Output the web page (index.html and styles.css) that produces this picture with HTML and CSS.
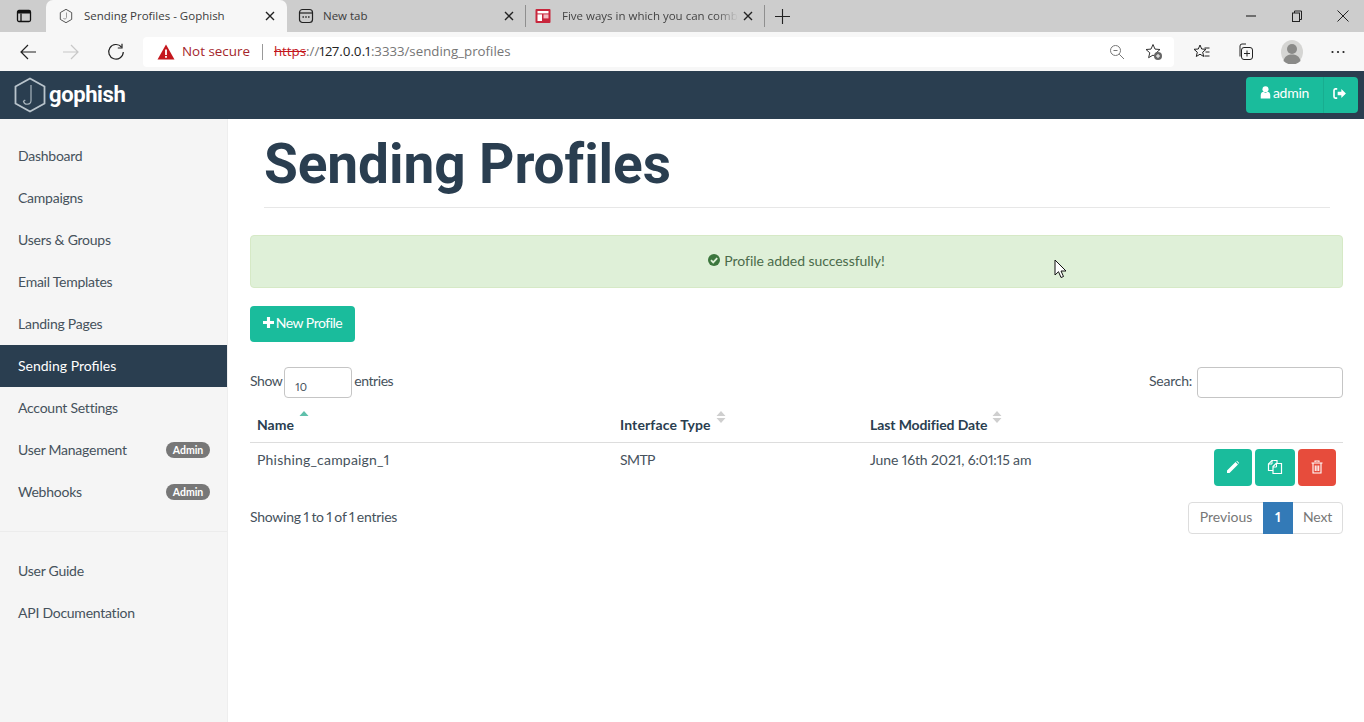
FILE: index.html
```html
<!DOCTYPE html>
<html lang="en">
<head>
<meta charset="utf-8">
<title>Sending Profiles - Gophish</title>
<link rel="stylesheet" href="styles.css">
</head>
<body>
<div class="tabstrip">
  <div class="tabside"><svg class="ic16" viewBox="0 0 16 16"><rect x="1.5" y="2.5" width="13" height="11" rx="1.5" fill="none" stroke="#111" stroke-width="1.3"/><path d="M5 5.500v8" stroke="#111" stroke-width="1.3" fill="none"/><rect x="2" y="3" width="12" height="2.5" fill="#111"/></svg></div>
  <div class="tab tab-active">
    <svg class="ic16" viewBox="0 0 16 16"><path d="M8 1.300l5.700 3.300v6.800L8 14.700l-5.700-3.300V4.600z" fill="none" stroke="#555" stroke-width="1"/><path d="M8.500 4.500v5a1.700 1.700 0 0 1-3.200.6" fill="none" stroke="#888" stroke-width=".8"/></svg>
    <span class="tab-title">Sending Profiles - Gophish</span>
    <svg class="tab-x" viewBox="0 0 10 10"><path d="M1 1l8 8M9 1l-8 8" stroke="#222" stroke-width="1.4"/></svg>
  </div>
  <div class="tab tab-plain">
    <svg class="ic16" viewBox="0 0 16 16"><rect x="1.500" y="1.500" width="13" height="13" rx="3" fill="none" stroke="#222" stroke-width="1.2"/><path d="M1.500 5h13" stroke="#222" stroke-width="1.2"/><path d="M4.500 9h1.400M7.300 9h1.400M10.100 9h1.400" stroke="#222" stroke-width="1.4"/></svg>
    <span class="tab-title">New tab</span>
    <svg class="tab-x" viewBox="0 0 10 10"><path d="M1 1l8 8M9 1l-8 8" stroke="#222" stroke-width="1.4"/></svg>
  </div>
  <div class="tab tab-third">
    <svg class="ic16" viewBox="0 0 16 16"><rect x=".5" y="1" width="15" height="14" rx="1" fill="#c8263c"/><rect x="2.500" y="3" width="11" height="2.400" fill="#fff"/><rect x="2.500" y="6.400" width="4.500" height="6.600" fill="#fff"/><rect x="8.500" y="6.400" width="5" height="4" fill="#f3b8c0"/></svg>
    <span class="tab-title tab-fade">Five ways in which you can comb</span>
    <svg class="tab-x" viewBox="0 0 10 10"><path d="M1 1l8 8M9 1l-8 8" stroke="#222" stroke-width="1.4"/></svg>
  </div>
  <svg class="newtab" viewBox="0 0 16 16"><path d="M8 0v16M0 8h16" stroke="#222" stroke-width="1.2"/></svg>
  <div class="winctl">
    <svg class="ic12" viewBox="0 0 12 12"><path d="M1 6h10" stroke="#222" stroke-width="1.1"/></svg>
    <svg class="ic12" viewBox="0 0 12 12"><rect x="1.500" y="3" width="7" height="8.500" fill="none" stroke="#222"/><path d="M3.500 3V1h7v8.500H8.500" fill="none" stroke="#222"/></svg>
    <svg class="ic12" viewBox="0 0 12 12"><path d="M.5 .5l11 11M11.500 .5l-11 11" stroke="#222" stroke-width="1"/></svg>
  </div>
</div>
<div class="toolbar">
  <svg class="nav-ic nav-back" viewBox="0 0 18 18"><path d="M17 9H2M9 2L2 9l7 7" fill="none" stroke="#222" stroke-width="1.2"/></svg>
  <svg class="nav-ic nav-fwd" viewBox="0 0 18 18"><path d="M1 9h15M9 2l7 7-7 7" fill="none" stroke="#c8c8c8" stroke-width="1.2"/></svg>
  <svg class="nav-ic nav-reload" viewBox="0 0 18 18"><path d="M14.500 4A7.300 7.300 0 1 0 16.300 9" fill="none" stroke="#222" stroke-width="1.2"/><path d="M15 .8V5h-4.200" fill="none" stroke="#222" stroke-width="1.2"/></svg>
  <div class="addr">
    <svg class="warn" viewBox="0 0 18 16"><path d="M9 .5L17.500 15.500H.5z" fill="#c4161c"/><path d="M9 5.500v5.500M9 12v1.800" stroke="#fff" stroke-width="1.800"/></svg>
    <span class="notsec">Not secure</span>
    <span class="addr-sep"></span>
    <span class="url"><s class="url-s">https</s><span class="url-dim">://</span><span class="url-host">127.0.0.1</span><span class="url-dim">:3333/sending_profiles</span></span>
    <svg class="ic16 addr-zoom" viewBox="0 0 16 16"><circle cx="6.500" cy="6.500" r="5" fill="none" stroke="#777"/><path d="M10.200 10.200L15 15M4.500 6.500h4" stroke="#777"/></svg>
    <svg class="addr-star" viewBox="0 0 18 18"><path d="M8 1.500l2 4.600 5 .4-3.800 3.300 1.200 4.900L8 12.100l-4.400 2.600 1.200-4.900L1 6.500l5-.4z" fill="none" stroke="#333"/><circle cx="13" cy="13" r="4" fill="#666"/><path d="M13 11v4M11 13h4" stroke="#fff"/></svg>
  </div>
  <svg class="tb-ic tb-fav" viewBox="0 0 18 18"><path d="M7 2l1.700 4 4.300.3-3.300 2.900 1 4.300L7 11.200 3.300 13.500l1-4.300L1 6.300 5.300 6z" fill="none" stroke="#222"/><path d="M11.500 5h5M12.500 9h4M11.500 13h5" stroke="#222"/></svg>
  <svg class="tb-ic tb-coll" viewBox="0 0 18 18"><path d="M4 13.500V3a2 2 0 0 1 2-2h4" fill="none" stroke="#222"/><rect x="5.500" y="4.500" width="11" height="12" rx="2.500" fill="#f7f7f7" stroke="#222"/><path d="M11 7.500v6M8 10.500h6" stroke="#222"/></svg>
  <svg class="tb-avatar" viewBox="0 0 24 24"><ellipse cx="12" cy="12" rx="11" ry="12" fill="#d5d5d3"/><circle cx="12" cy="9" r="5" fill="#8a8a88"/><path d="M3.500 21c1-5 4.500-6.500 8.500-6.500s7.500 1.500 8.500 6.500a12 12 0 0 1-17 0z" fill="#8a8a88"/></svg>
  <svg class="tb-ic tb-more" viewBox="0 0 18 18"><circle cx="3.500" cy="9" r="1.100" fill="#222"/><circle cx="9" cy="9" r="1.100" fill="#222"/><circle cx="14.500" cy="9" r="1.100" fill="#222"/></svg>
</div>
<header class="navbar">
  <div class="brand">
    <svg class="brand-mark" viewBox="0 0 32 36"><path d="M16 1.500L30.500 9.500v17L16 34.500 1.500 26.500v-17z" fill="none" stroke="#b9c4cc" stroke-width="1.800"/><path d="M17 8v15.500a3.800 3.800 0 0 1-7.500.8l1.800-1.300" fill="none" stroke="#a9b5bd" stroke-width="1.200"/></svg>
    <span class="brand-name">gophish</span>
  </div>
  <div class="userbtn">
    <span class="user-main"><svg class="ic-user" viewBox="0 0 12 14"><circle cx="6" cy="3.500" r="3.300" fill="#fff"/><path d="M.8 13.500V10c0-2.600 1.800-3.800 3-3.800L6 7.500l2.200-1.300c1.200 0 3 1.200 3 3.800v3.500z" fill="#fff"/></svg>admin</span>
    <span class="user-out"><svg class="ic-out" viewBox="0 0 14 12"><path d="M4.500 1H2.500A1.800 1.800 0 0 0 1 2.800v6.400A1.800 1.800 0 0 0 2.500 11h2" fill="none" stroke="#fff" stroke-width="1.800"/><path d="M5 4h4V1l5 5-5 5V8H5z" fill="#fff"/></svg></span>
  </div>
</header>
<div class="page">
  <nav class="sidebar">
    <ul class="side-list">
      <li class="side-item">Dashboard</li>
      <li class="side-item">Campaigns</li>
      <li class="side-item">Users &amp; Groups</li>
      <li class="side-item">Email Templates</li>
      <li class="side-item">Landing Pages</li>
      <li class="side-item side-active">Sending Profiles</li>
      <li class="side-item">Account Settings</li>
      <li class="side-item">User Management<span class="badge">Admin</span></li>
      <li class="side-item">Webhooks<span class="badge">Admin</span></li>
    </ul>
    <ul class="side-list side-second">
      <li class="side-item">User Guide</li>
      <li class="side-item">API Documentation</li>
    </ul>
  </nav>
  <main class="main">
    <h1 class="title">Sending Profiles</h1>
    <div class="alert"><svg class="ic-check" viewBox="0 0 12 12"><circle cx="6" cy="6" r="6" fill="#3c763d"/><path d="M3 6.200l2.200 2.200L9.200 4.200" fill="none" stroke="#dff0d8" stroke-width="1.800"/></svg>Profile added successfully!</div>
    <button class="btn-new"><svg class="ic-plus" viewBox="0 0 12 12"><path d="M6 0v12M0 6h12" stroke="#fff" stroke-width="3.400"/></svg>New Profile</button>
    <div class="controls">
      <div class="ctl-left">Show <span class="select-box">10</span> entries</div>
      <div class="ctl-right">Search: <input class="search" type="text" aria-label="Search"></div>
    </div>
    <table class="tbl">
      <thead>
        <tr>
          <th class="col-name"><span class="th-in">Name<svg class="sort" viewBox="0 0 10 12"><path d="M5 0l4.500 5H.5z" fill="#5fc0ab"/></svg></span></th>
          <th class="col-type"><span class="th-in">Interface Type<svg class="sort" viewBox="0 0 10 12"><path d="M5 0l4.500 5H.5zM5 12l4.500-5H.5z" fill="#cfcfcf"/></svg></span></th>
          <th class="col-date"><span class="th-in">Last Modified Date<svg class="sort" viewBox="0 0 10 12"><path d="M5 0l4.500 5H.5zM5 12l4.500-5H.5z" fill="#cfcfcf"/></svg></span></th>
          <th class="col-act"></th>
        </tr>
      </thead>
      <tbody>
        <tr>
          <td class="cell-name">Phishing_campaign_1</td>
          <td class="cell-type">SMTP</td>
          <td class="cell-date">June 16th 2021, 6:01:15 am</td>
          <td class="acts">
            <span class="act act-edit"><svg class="ic14" viewBox="0 0 14 14"><path d="M1 10.500L9.500 2l2.500 2.500L3.500 13H1zM10.300 1.300l.7-.5 2.200 2.200-.5.700z" fill="#fff"/></svg></span>
            <span class="act act-copy"><svg class="ic16" viewBox="0 0 16 16"><path d="M6.500 1.500H5L1.500 5v6.500H6" fill="none" stroke="#fff" stroke-width="1.200"/><path d="M5 1.500V5H1.500" fill="none" stroke="#fff" stroke-width="1"/><path d="M6.500 1.500h3.500v3" fill="none" stroke="#fff" stroke-width="1.200"/><path d="M10 4.500H9L6 7.500v7h8.500v-10z" fill="none" stroke="#fff" stroke-width="1.200"/><path d="M9.500 4.500V8H6" fill="none" stroke="#fff" stroke-width="1"/></svg></span>
            <span class="act act-del"><svg class="ic14" viewBox="0 0 14 14"><path d="M5 2V1h4v1M1.500 3h11M3 3.500V13h8V3.500M5.300 5.500V11M7 5.500V11M8.700 5.500V11" fill="none" stroke="#fff" stroke-width="1.100"/></svg></span>
          </td>
        </tr>
      </tbody>
    </table>
    <div class="foot">
      <div class="info">Showing 1 to 1 of 1 entries</div>
      <div class="pager"><span class="pg pg-prev">Previous</span><span class="pg pg-cur">1</span><span class="pg pg-next">Next</span></div>
    </div>
  </main>
</div>
<svg class="cursor" viewBox="0 0 13 20"><path d="M1 1v15l3.500-3.300L7 18.500l2.500-1-2.500-5.500h5z" fill="#fff" stroke="#111"/></svg>
</body>
</html>
```
FILE: styles.css
```css
* { box-sizing: border-box; }
html, body { margin: 0; height: 722px; overflow: hidden; }
body { font-family: "Lato", "Open Sans", sans-serif; font-size: 14px; color: #46525c; background: #fff; position: relative; font-variant-numeric: proportional-nums; }
svg { display: block; flex: none; }
.ic16 { width: 16px; height: 16px; }
.ic14 { width: 14px; height: 14px; }
.ic12 { width: 12px; height: 12px; }

.tabstrip { height: 32px; background: #cdcdcd; display: flex; align-items: center; }
.tabside { width: 46px; padding-left: 16px; }
.tab { display: flex; align-items: center; font-family: "Open Sans", sans-serif; font-size: 11.500px; color: #3c3c3c; }
.tab-active { width: 241px; height: 32px; background: #f7f7f7; border-radius: 7px 7px 0 0; padding: 0 12px; }
.tab-plain { width: 239px; height: 22px; padding: 0 11px; border-right: 1px solid #8f8f8f; }
.tab-third { width: 239px; height: 22px; padding: 0 11px 0 9px; border-right: 1px solid #8f8f8f; }
.tab-title { flex: 1; padding: 0 0 2px 10px; white-space: nowrap; overflow: hidden; }
.tab-plain .tab-title { padding-left: 9px; }
.tab-third .tab-title { padding-left: 11px; }
.tab-fade { color: #444; -webkit-mask-image: linear-gradient(90deg, #000 88%, transparent); mask-image: linear-gradient(90deg, #000 88%, transparent); }
.tab-x { width: 10px; height: 10px; margin-left: 5px; }
.newtab { width: 15px; height: 15px; margin-left: 10px; }
.winctl { margin-left: auto; display: flex; gap: 34px; padding-right: 15px; }

.toolbar { height: 39px; background: #f7f7f7; display: flex; align-items: center; padding-left: 19px; }
.nav-ic { width: 18px; height: 18px; }
.nav-fwd { margin-left: 25px; }
.nav-reload { margin-left: 27px; }
.addr { margin-left: 18px; width: 1031px; height: 30px; background: #fff; border-radius: 4px; display: flex; align-items: center; padding-left: 14px; font-family: "Open Sans", sans-serif; font-size: 13.300px; }
.warn { width: 18px; height: 16px; }
.notsec { color: #a4262c; margin-left: 7px; font-size: 13.400px; padding-bottom: 1px; }
.addr-sep { width: 1px; height: 16px; background: #999; margin: 0 11px 0 12px; }
.url { flex: 1; color: #767676; white-space: nowrap; padding-bottom: 1px; }
.url-s { color: #c4161c; }
.url-dim { color: #767676; }
.url-host { color: #222; }
.addr-zoom { margin-right: 20px; }
.addr-star { width: 18px; height: 18px; margin-right: 11px; }
.tb-ic { width: 18px; height: 18px; }
.tb-fav { margin-left: 19px; }
.tb-coll { margin-left: 25px; }
.tb-avatar { width: 24px; height: 24px; margin-left: 26px; }
.tb-more { margin-left: 25px; }

.navbar { height: 48px; background: #2a3e50; display: flex; align-items: center; justify-content: space-between; padding: 0 6px 0 14px; }
.brand { display: flex; align-items: center; gap: 3px; }
.brand-mark { width: 32px; height: 36px; }
.brand-name { font-family: "Roboto", sans-serif; font-weight: 700; font-size: 22px; color: #fff; letter-spacing: -.4px; padding-bottom: 2px; }
.userbtn { display: flex; height: 36px; background: #1abc9c; border-radius: 4px; color: #fff; font-size: 14px; letter-spacing: -.25px; }
.user-main { width: 77px; display: flex; align-items: center; justify-content: center; gap: 2px; padding-bottom: 5px; }
.user-out { width: 35px; display: flex; align-items: center; justify-content: center; border-left: 1px solid #18ad90; padding: 0 3px 3px 0; }
.ic-user { width: 11px; height: 13px; }
.ic-out { width: 13px; height: 11px; }

.page { display: flex; height: 603px; }
.sidebar { width: 228px; background: #f5f5f5; border-right: 1px solid #eee; padding-top: 16px; flex: none; }
.side-list { list-style: none; margin: 0; padding: 0; }
.side-second { margin-top: 18px; padding-top: 18px; border-top: 1px solid #ececec; }
.side-item { height: 42px; display: flex; align-items: center; justify-content: space-between; padding: 0 17px 2px 18px; letter-spacing: -.25px; }
.side-active { background: #2a3e50; color: #fff; letter-spacing: 0; }
.badge { background: #777; color: #fff; font-size: 10.500px; font-weight: 700; border-radius: 8px; width: 44px; height: 16px; display: flex; align-items: center; justify-content: center; letter-spacing: 0; margin-top: 2px; }

.main { flex: 1; padding: 0 21px 0 22px; }
.title { margin: 0 13px 0 14px; height: 89px; border-bottom: 1px solid #e7e7e7; font-family: "Roboto", sans-serif; font-weight: 700; font-size: 55px; line-height: 90px; color: #2a3e50; letter-spacing: -.1px; }
.alert { margin-top: 27px; height: 53px; background: #dff0d8; border: 1px solid #d6e9c6; border-radius: 4px; display: flex; align-items: center; justify-content: center; gap: 4px; color: #4b6b4b; padding-bottom: 3px; letter-spacing: -.05px; }
.ic-check { width: 12px; height: 12px; }
.btn-new { margin-top: 18px; width: 105px; height: 36px; background: #1abc9c; border: 0; border-radius: 4px; color: #fff; font: 14px "Lato", sans-serif; letter-spacing: -.5px; display: flex; align-items: center; justify-content: center; gap: 2px; padding: 0 0 3px; }
.ic-plus { width: 11px; height: 11px; }
.controls { margin-top: 25px; height: 31px; display: flex; justify-content: space-between; align-items: flex-start; line-height: 28px; letter-spacing: -.25px; }
.ctl-left { display: flex; align-items: flex-start; gap: 2px; letter-spacing: -.45px; }
.ctl-right { display: flex; align-items: flex-start; gap: 5px; }
.select-box { width: 68px; height: 31px; border: 1px solid #c5c5c5; border-radius: 4px; font-size: 11px; padding: 12px 0 0 10px; line-height: 14px; letter-spacing: 0; }
.search { width: 146px; height: 31px; border: 1px solid #c5c5c5; border-radius: 4px; background: #fff; }
.tbl { margin-top: 6px; width: 1093px; border-collapse: collapse; table-layout: fixed; }
.tbl th { height: 38px; text-align: left; padding: 0 7px; color: #2a3e50; font-weight: 700; border-bottom: 1px solid #ddd; vertical-align: bottom; }
.th-in { display: flex; align-items: flex-end; padding-bottom: 9px; }
.col-type .th-in { letter-spacing: .13px; }
.col-date .th-in { letter-spacing: -.1px; }
.sort { width: 10px; height: 12px; margin: 0 0 10px 5px; }
.col-name { width: 363px; }
.col-type { width: 250px; }
.col-date { width: 300px; }
.tbl td { padding: 8px 7px 0; vertical-align: top; height: 50px; }
.tbl .cell-name { letter-spacing: .2px; }
.tbl .cell-type { letter-spacing: -.6px; }
.tbl .cell-date { letter-spacing: -.12px; }
.tbl .acts { padding: 6px 7px 0 0; }
.acts { display: flex; justify-content: flex-end; gap: 3px; }
.act { height: 37px; border-radius: 4px; display: flex; align-items: center; justify-content: center; }
.act-edit { width: 38px; background: #1abc9c; }
.act-copy { width: 40px; background: #1abc9c; }
.act-del { width: 38px; background: #e74c3c; }
.foot { display: flex; justify-content: space-between; align-items: flex-start; margin-top: 9px; }
.info { padding-top: 6px; letter-spacing: -.25px; word-spacing: -.7px; }
.pager { display: flex; height: 32px; border: 1px solid #ddd; border-radius: 4px; color: #777; }
.pg { display: flex; align-items: center; justify-content: center; padding-bottom: 2px; }
.pg-prev { width: 74px; }
.pg-cur { width: 30px; background: #337ab7; color: #fff; margin: -1px 0; font-weight: 700; }
.pg-next { width: 49px; letter-spacing: -.2px; }
.cursor { position: absolute; left: 1054px; top: 259px; width: 13px; height: 20px; }
```
